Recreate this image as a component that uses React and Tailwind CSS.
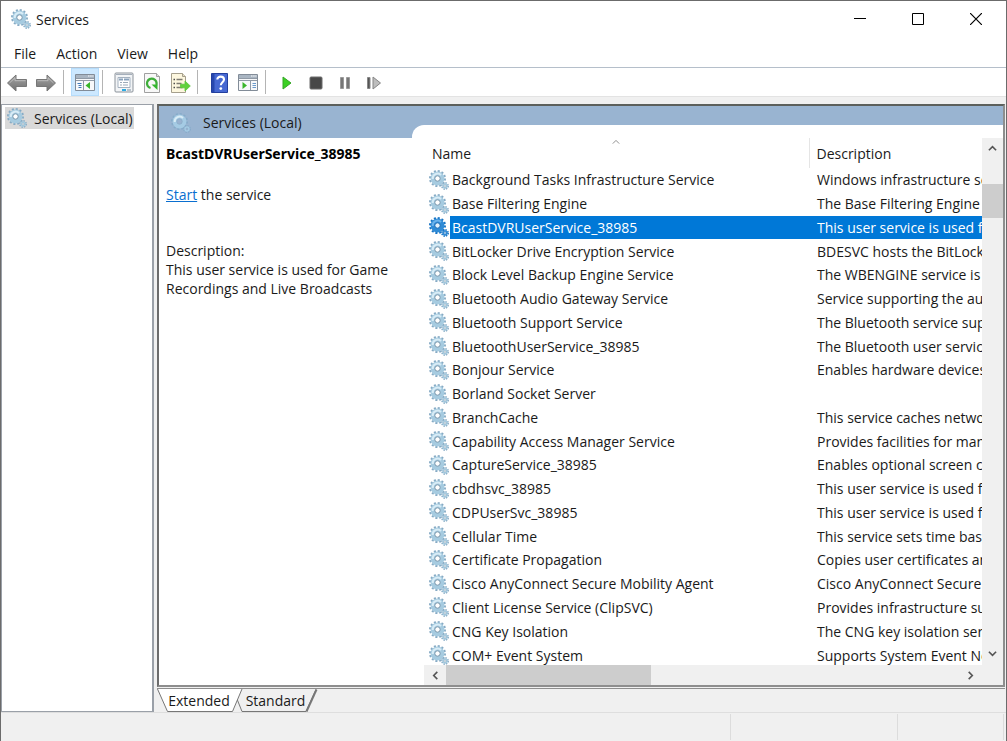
import { useState } from "react";

const SERVICES = [
    ["Background Tasks Infrastructure Service", "Windows infrastructure service that controls"],
    ["Base Filtering Engine", "The Base Filtering Engine (BFE) is a service"],
    ["BcastDVRUserService_38985", "This user service is used for Game Recordings"],
    ["BitLocker Drive Encryption Service", "BDESVC hosts the BitLocker Drive Encryption"],
    ["Block Level Backup Engine Service", "The WBENGINE service is used by Windows"],
    ["Bluetooth Audio Gateway Service", "Service supporting the audio gateway role"],
    ["Bluetooth Support Service", "The Bluetooth service supports discovery"],
    ["BluetoothUserService_38985", "The Bluetooth user service supports proper"],
    ["Bonjour Service", "Enables hardware devices and software"],
    ["Borland Socket Server", ""],
    ["BranchCache", "This service caches network content from"],
    ["Capability Access Manager Service", "Provides facilities for managing UWP apps"],
    ["CaptureService_38985", "Enables optional screen capture functionality"],
    ["cbdhsvc_38985", "This user service is used for Clipboard"],
    ["CDPUserSvc_38985", "This user service is used for Connected"],
    ["Cellular Time", "This service sets time based on NITZ messages"],
    ["Certificate Propagation", "Copies user certificates and root certificates"],
    ["Cisco AnyConnect Secure Mobility Agent", "Cisco AnyConnect Secure Mobility Agent"],
    ["Client License Service (ClipSVC)", "Provides infrastructure support for the"],
    ["CNG Key Isolation", "The CNG key isolation service is hosted in"],
    ["COM+ Event System", "Supports System Event Notification Service"],
];

const GearIcon = ({ selected = false, faded = false }) => {
    const teeth = selected ? "#1673c4" : faded ? "#86abc9" : "#86aac4";
    const rim = selected ? "#1668b4" : faded ? "#8fb0cb" : "#7796ac";
    const body = selected ? "#2f8bd6" : faded ? "#a5cbe4" : "#a6cbe0";
    const shine = selected ? "#6bb2ec" : faded ? "#d9ecf6" : "#d8ecf6";
    const hole = selected ? "#e3f1fc" : faded ? "#9ab3d1" : "#ffffff";
    return (
        <svg className="block shrink-0" width="20" height="20" viewBox="0 0 20 20" fill="none">
            <circle cx="8.500" cy="8.500" r="7.500" stroke={teeth} strokeWidth="2" strokeDasharray="2.100 1.827"/>
            <circle cx="8.500" cy="8.500" r="4.700" stroke={body} strokeWidth="4.400"/>
            <path d="M3.700 9A4.900 4.900 0 0 1 12 5" stroke={shine} strokeWidth="2"/>
            <circle cx="8.500" cy="8.500" r="2.700" fill={hole} stroke={rim}/>
            <circle cx="16" cy="16" r="3.100" stroke={teeth} strokeWidth="1.700" strokeDasharray="1.400 1.034"/>
            <circle cx="16" cy="16" r="1.900" stroke={body} strokeWidth="1.500"/>
            <circle cx="16" cy="16" r="1" fill={hole} stroke={rim} strokeWidth="0.500"/>
        </svg>
    );
};

const ArrowIcon = ({ flip = false }) => (
    <svg className={flip ? "-scale-x-100" : ""} width="22" height="20" viewBox="0 0 22 20">
        <defs>
            <linearGradient id="arrow" x1="0" y1="0" x2="0" y2="1">
                <stop offset="0" stopColor="#a8a8a8"/>
                <stop offset="0.5" stopColor="#8a8a8a"/>
                <stop offset="1" stopColor="#707070"/>
            </linearGradient>
        </defs>
        <path d="M1.5 10 10 2v4.500h10.500v7H10V18z" fill="url(#arrow)" stroke="#777" strokeLinejoin="round"/>
        <path d="M3.500 10 9 4.800v2.900h10.500" fill="none" stroke="#c4c4c4" strokeWidth="0.8"/>
    </svg>
);

const TreeIcon = () => (
    <svg width="20" height="17" viewBox="0 0 20 17">
        <path d="M.5.5h19v16H.5z" fill="#f7f8fa" stroke="#828c98"/>
        <path d="M1 1h18v3H1z" fill="#a9b5c2"/>
        <path d="M13 2h1.500M15.200 2h1.500M17.300 2h1.200" stroke="#fff"/>
        <path d="M1 4.500h18M1 6.500h18M8.500 7v9" stroke="#909aa6"/>
        <path d="M2.500 9.500h4M3.500 11.500h3M3.500 13.500h3" stroke="#3e78b8"/>
        <path d="M15 8v7l-4.500-3.500z" fill="#39b52a"/>
    </svg>
);

const PropertiesIcon = () => (
    <svg width="20" height="21" viewBox="0 0 20 21">
        <rect x="1" y="1" width="18" height="19" rx="1" fill="#f2f4f6" stroke="#8b929a"/>
        <path d="M2 2.500h16" stroke="#a5afbb"/>
        <path d="M4 5.500h12v10H4z" fill="#fff" stroke="#a4b1bf"/>
        <path d="M5 7.500h4M10 7.500h5" stroke="#8aa2bb" strokeWidth="2"/>
        <path d="M6 10.500h2M9 10.500h5M6 13h2M9 13h5" stroke="#9cabba"/>
        <path d="M8 18h4" stroke="#2cabe2" strokeWidth="2"/>
        <path d="M13 18h4" stroke="#b9c2cb" strokeWidth="2"/>
    </svg>
);

const RefreshIcon = () => (
    <svg width="18" height="20" viewBox="0 0 18 20" fill="none">
        <path d="M1.500.5h12l3 3v16h-15z" fill="#f8f8f8" stroke="#a0a0a0"/>
        <path d="M13.500.5v3h3" fill="#ddd" stroke="#a0a0a0"/>
        <path d="M7.500 15A4.800 4.800 0 1 1 13.300 12" stroke="#3fae3a" strokeWidth="2.300"/>
        <path d="M8.500 11.500h6v5.500z" fill="#35b62e"/>
    </svg>
);

const ExportIcon = () => (
    <svg width="21" height="20" viewBox="0 0 21 20" fill="none">
        <path d="M1.500.5h11l3 3v16h-14z" fill="#fdf7df" stroke="#a59f8d"/>
        <path d="M12.500.5v3h3" fill="#e7dfc5" stroke="#a59f8d"/>
        <path d="M3.500 6.500H5M3.500 10.500H5M3.500 14.500H5" stroke="#4e4e4e" strokeWidth="1.500"/>
        <path d="M6.500 6.500h6M6.500 10.500h5M6.500 14.500h6" stroke="#7d7a71" strokeWidth="1.300"/>
        <path d="M10.500 11.200h4.500V8l5.300 5-5.300 5v-3.200h-4.500z" fill="#5fd13b" stroke="#5cc43c" strokeWidth="0.8"/>
    </svg>
);

const HelpIcon = () => (
    <svg width="17" height="20" viewBox="0 0 17 20" fill="none">
        <path d="M.5.5h16v19H.5z" fill="#4668d2" stroke="#233f9e"/>
        <path d="M1 1h2.500v18H1z" fill="#2747ae"/>
        <path d="M6.300 6.500C6.300 2.700 13 2.700 13 6.500c0 2.700-3.200 2.800-3.200 5.800" stroke="#fff" strokeWidth="2.100"/>
        <circle cx="9.800" cy="15.600" r="1.400" fill="#fff"/>
    </svg>
);

const ConsoleIcon = () => (
    <svg width="20" height="17" viewBox="0 0 20 17">
        <path d="M.5.5h19v16H.5z" fill="#f7f8fa" stroke="#828c98"/>
        <path d="M1 1h18v3H1z" fill="#a9b5c2"/>
        <path d="M13 2h1.500M15.200 2h1.500M17.300 2h1.200" stroke="#fff"/>
        <path d="M1 4.500h18M1 6.500h18M12.500 7v9" stroke="#909aa6"/>
        <path d="M14.500 9.500h3.500M14.500 11.500h3.500M14.500 13.500h3.500" stroke="#6a9acc"/>
        <path d="M4.500 8v7L9 11.500z" fill="#39b52a"/>
    </svg>
);

const PlayIcon = () => (
    <svg width="10" height="14" viewBox="0 0 10 14">
        <path d="M1 1v12l8-6z" fill="#3bd023" stroke="#35a626"/>
    </svg>
);

const StopIcon = () => (
    <svg width="14" height="14" viewBox="0 0 14 14">
        <rect x="1" y="1" width="12" height="12" rx="1" fill="#484848" stroke="#6d6d6d"/>
    </svg>
);

const PauseIcon = () => (
    <svg width="12" height="14" viewBox="0 0 12 14" fill="#777" stroke="#9a9a9a">
        <path d="M1.500 1.500h3v11h-3zM7.500 1.500h3v11h-3z"/>
    </svg>
);

const RestartIcon = () => (
    <svg width="16" height="14" viewBox="0 0 16 14">
        <path d="M1.500 1.500h2.500v11H1.500z" fill="#555" stroke="#888"/>
        <path d="M7 1v12l7.500-6z" fill="#bdbdbd" stroke="#858585"/>
    </svg>
);

const Chevron = ({ d, small = false }) => (
    <svg width={small ? 8 : 9} height={small ? 8 : 9} viewBox="0 0 10 10" fill="none"
        stroke={small ? "#8a8a8a" : "#555"} strokeWidth={small ? 1.2 : 1.8}>
        <path d={d}/>
    </svg>
);

const ToolButton = ({ label, active = false, children }) => (
    <button aria-label={label}
        className={`flex h-7 w-7 items-center justify-center pt-px ${active ? "bg-[#cce8ff] outline -outline-offset-1 outline-[#b5dcfb]" : ""}`}>
        {children}
    </button>
);

const Separator = () => <div className="mr-[7px] ml-[3px] h-6 w-px bg-[#b4b4b4]"/>;

const TitleBar = () => (
    <header className="flex h-9 items-center pr-px">
        <div className="flex flex-1 items-center gap-[5px] pl-2.5">
            <GearIcon/>
            <h1>Services</h1>
        </div>
        <button aria-label="Minimize" className="flex h-full w-[58px] items-center justify-center">
            <svg width="12" height="12" viewBox="0 0 12 12"><path d="M0 5.500h12" stroke="#000"/></svg>
        </button>
        <button aria-label="Maximize" className="flex h-full w-[58px] items-center justify-center">
            <svg width="12" height="12" viewBox="0 0 12 12"><path d="M.5.5h11v11H.5z" fill="none" stroke="#000"/></svg>
        </button>
        <button aria-label="Close" className="flex h-full w-[58px] items-center justify-center">
            <svg width="12" height="12" viewBox="0 0 12 12"><path d="m0 0 12 12M12 0 0 12" stroke="#000" strokeWidth="1.200"/></svg>
        </button>
    </header>
);

const Toolbar = () => (
    <div className="flex h-[30px] items-center border-t border-b border-t-[#b5bfca] border-b-[#e3e3e3] pl-0.5">
        <div className="flex gap-px">
            <ToolButton label="Back"><ArrowIcon/></ToolButton>
            <ToolButton label="Forward"><ArrowIcon flip/></ToolButton>
        </div>
        <Separator/>
        <ToolButton label="Show/Hide Console Tree" active><TreeIcon/></ToolButton>
        <Separator/>
        <div className="flex">
            <ToolButton label="Properties"><PropertiesIcon/></ToolButton>
            <ToolButton label="Refresh"><RefreshIcon/></ToolButton>
            <ToolButton label="Export List"><ExportIcon/></ToolButton>
        </div>
        <Separator/>
        <div className="flex gap-px">
            <ToolButton label="Help"><HelpIcon/></ToolButton>
            <ToolButton label="Show/Hide Action Pane"><ConsoleIcon/></ToolButton>
        </div>
        <Separator/>
        <div className="flex gap-px">
            <ToolButton label="Start Service"><PlayIcon/></ToolButton>
            <ToolButton label="Stop Service"><StopIcon/></ToolButton>
            <ToolButton label="Pause Service"><PauseIcon/></ToolButton>
            <ToolButton label="Restart Service"><RestartIcon/></ToolButton>
        </div>
    </div>
);

const ServiceTable = ({ selected, onSelect }) => (
    <table className="h-[calc(100%+2px)] w-full table-fixed border-collapse text-left whitespace-nowrap">
        <colgroup>
            <col className="w-[26px]"/>
            <col className="w-[359px]"/>
            <col/>
        </colgroup>
        <thead>
            <tr className="h-[30px]">
                <th colSpan={2} className="relative border-r border-[#e5e5e5] p-0 pl-2 font-normal">
                    Name
                    <span className="absolute inset-x-0 top-0 flex justify-center"><Chevron small d="M1 7 5 3l4 4"/></span>
                </th>
                <th className="p-0 pl-[7px] font-normal">Description</th>
            </tr>
        </thead>
        <tbody>
            {SERVICES.map(([name, description]) => {
                const active = name === selected;
                return (
                    <tr key={name} onClick={() => onSelect(name)}>
                        <td className="p-0 pl-[5px]"><GearIcon selected={active}/></td>
                        <td className={`p-0 pl-0.5 ${active ? "bg-[#0078d7] text-white" : ""}`}>{name}</td>
                        <td className={`overflow-hidden p-0 pl-2 ${active ? "bg-[#0078d7] text-white" : ""}`}>{description}</td>
                    </tr>
                );
            })}
        </tbody>
    </table>
);

const StatusBar = () => (
    <footer className="flex h-[29px] justify-end border-t border-[#dedede] py-px">
        <div className="w-[167px] border-l border-[#dcdcdc]"/>
        <div className="w-[107px] border-x border-[#dcdcdc]"/>
        <div className="w-0.5"/>
    </footer>
);

const App = () => {
    const [selected, setSelected] = useState("BcastDVRUserService_38985");

    return (
        <div className="flex h-screen flex-col border border-b-0 border-[#6b6b6b] bg-white font-['Open_Sans',sans-serif] text-[14px] leading-[19px] text-[#1a1a1a]">
            <TitleBar/>
            <nav className="flex h-[30px] items-center pt-0.5 pl-[3px]">
                <button className="px-2.5">File</button>
                <button className="px-2.5">Action</button>
                <button className="px-2.5">View</button>
                <button className="px-2.5">Help</button>
            </nav>
            <Toolbar/>
            <div className="flex min-h-0 flex-1 flex-col bg-[#f0f0f0] pt-[7px]">
                <div className="flex min-h-0 flex-1 gap-[3px]">
                    <aside className="w-[153px] shrink-0 border border-r-2 border-[#9aa0a8] bg-white py-0.5 pl-[3px]">
                        <a href="#local" className="flex h-[22px] w-[129px] items-center gap-[7px] bg-[#d9d9d9] pl-0.5">
                            <GearIcon/>
                            <span className="whitespace-nowrap">Services (Local)</span>
                        </a>
                    </aside>
                    <div className="flex min-w-0 flex-1 flex-col pr-px">
                        <main className="flex min-h-0 flex-1 border-2 border-t-[#5c605c] border-r-[#8e8e8e] border-b-[#8e8e8e] border-l-[#6c6c6c] bg-white">
                            <section className="flex w-[253px] shrink-0 flex-col">
                                <div className="flex h-8 items-center gap-3 bg-[#99b4d1] pt-px pl-3">
                                    <GearIcon faded/>
                                    <span>Services (Local)</span>
                                </div>
                                <div className="pt-1.5 pr-5 pl-[7px]">
                                    <h2 className="font-['Noto_Sans',sans-serif] font-bold text-black">{selected}</h2>
                                    <p className="mt-[22px]">
                                        <a href="#start" className="text-[#0a6fd0] underline">Start</a> the service
                                    </p>
                                    <p className="mt-[37px]">Description:</p>
                                    <p>This user service is used for Game Recordings and Live Broadcasts</p>
                                </div>
                            </section>
                            <section className="flex min-w-0 flex-1 flex-col bg-[#99b4d1] pt-[19px]">
                                <div className="flex min-h-0 flex-1 flex-col rounded-tl-xl bg-white pt-[13px] pl-3">
                                    <div className="flex min-h-0 flex-1">
                                        <div className="min-w-0 flex-1 overflow-hidden">
                                            <ServiceTable selected={selected} onSelect={setSelected}/>
                                        </div>
                                        <div className="flex w-[21px] flex-col items-center bg-[#f0f0f0]">
                                            <button aria-label="Scroll up" className="flex h-[46px] w-full justify-center pt-1.5"><Chevron d="M1 7 5 3l4 4"/></button>
                                            <div className="h-[34px] w-full bg-[#cdcdcd]"/>
                                            <div className="flex-1"/>
                                            <button aria-label="Scroll down" className="flex h-5 w-full justify-center pt-1"><Chevron d="m1 3 4 4 4-4"/></button>
                                        </div>
                                    </div>
                                    <div className="flex h-5 bg-[#f0f0f0] pr-[21px]">
                                        <button aria-label="Scroll left" className="flex w-[22px] items-center justify-center"><Chevron d="M7 1 3 5l4 4"/></button>
                                        <div className="w-[205px] bg-[#cdcdcd]"/>
                                        <div className="flex-1"/>
                                        <button aria-label="Scroll right" className="flex w-6 items-center justify-center"><Chevron d="m3 1 4 4-4 4"/></button>
                                    </div>
                                </div>
                            </section>
                        </main>
                        <div className="mt-px flex h-6 border-t border-[#8e8e8e]">
                            <div role="tablist" className="relative flex h-[23px]">
                                <svg className="absolute top-0 left-0" width="162" height="23" viewBox="0 0 162 23" fill="none">
                                    <path d="M80 10 85 22.500H149L159 .5" fill="#f0f0f0" stroke="#777"/>
                                    <path d="M149.500 22.500 159.500.5" stroke="#777" strokeWidth="2"/>
                                    <path d="M.5-1 10.500 22.500h65L85-1z" fill="#fff"/>
                                    <path d="M.5 0 10.500 22.500h65L85 0" stroke="#777"/>
                                </svg>
                                <button role="tab" aria-selected="true" className="relative w-[81px] pl-[3px]">Extended</button>
                                <button role="tab" aria-selected="false" className="relative w-[75px]">Standard</button>
                            </div>
                        </div>
                    </div>
                </div>
                <StatusBar/>
            </div>
        </div>
    );
};

export default App;
